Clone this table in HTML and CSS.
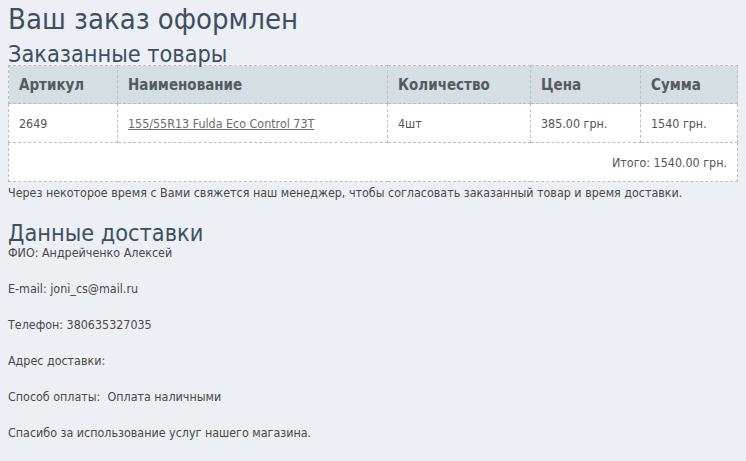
FILE: index.html
```html
<!DOCTYPE html>
<html lang="ru">
<head>
<meta charset="utf-8">
<title>Ваш заказ оформлен</title>
<link rel="stylesheet" href="styles.css">
</head>
<body>
<div class="page">
  <h1 class="title">Ваш заказ оформлен</h1>
  <h2 class="subtitle">Заказанные товары</h2>
  <table class="order">
    <thead>
      <tr>
        <th class="c-art">Артикул</th>
        <th class="c-name">Наименование</th>
        <th class="c-qty">Количество</th>
        <th class="c-price">Цена</th>
        <th class="c-sum">Сумма</th>
      </tr>
    </thead>
    <tbody>
      <tr>
        <td>2649</td>
        <td><a href="#" class="prod">155/55R13 Fulda Eco Control 73T</a></td>
        <td>4шт</td>
        <td>385.00 грн.</td>
        <td>1540 грн.</td>
      </tr>
      <tr>
        <td colspan="5" class="total">Итого: 1540.00 грн.</td>
      </tr>
    </tbody>
  </table>
  <p class="note">Через некоторое время с Вами свяжется наш менеджер, чтобы согласовать заказанный товар и время доставки.</p>
  <h2 class="subtitle delivery">Данные доставки</h2>
  <p class="info">ФИО: Андрейченко Алексей</p>
  <p class="info">E-mail: joni_cs@mail.ru</p>
  <p class="info">Телефон: 380635327035</p>
  <p class="info">Адрес доставки: </p>
  <p class="info">Способ оплаты:&nbsp; Оплата наличными</p>
  <p class="info">Спасибо за использование услуг нашего магазина.</p>
</div>
</body>
</html>
```
FILE: styles.css
```css
html, body {
  margin: 0;
  padding: 0;
  background: #eceff4;
}
body {
  font-family: Tahoma, "DejaVu Sans Condensed", "DejaVu Sans", sans-serif;
  font-size: 12.4px;
  color: #4a4a4a;
}
.page {
  padding: 3px 8px 0 8px;
}
.title {
  margin: 0 0 8px 0;
  font-weight: normal;
  font-size: 29px;
  line-height: 32px;
  color: #3e4f60;
}
.subtitle {
  margin: 0;
  font-weight: normal;
  font-size: 23.3px;
  line-height: 22px;
  color: #3e4f60;
}
.order {
  width: 730px;
  table-layout: fixed;
  border-collapse: collapse;
  background: #ffffff;
  border: 1px dashed #bdbdbd;
}
.order th, .order td {
  border: 1px dashed #bdbdbd;
  text-align: left;
  padding: 0 10px;
}
.order th {
  background: #d3dfe2;
  height: 37px;
  font-size: 15px;
  font-weight: bold;
  color: #555a5e;
}
.order td {
  height: 38px;
  color: #555555;
}
.c-art { width: 88px; }
.c-name { width: 249px; }
.c-qty { width: 122px; }
.c-price { width: 89px; }
.prod {
  color: #6b6b6b;
  text-decoration: underline;
}
.order td.total {
  text-align: right;
}
.note {
  margin: 3px 0 0 0;
  line-height: 16px;
}
.delivery {
  margin-top: 21px;
}
.info {
  margin: 0 0 18px 0;
  line-height: 18px;
}
```
